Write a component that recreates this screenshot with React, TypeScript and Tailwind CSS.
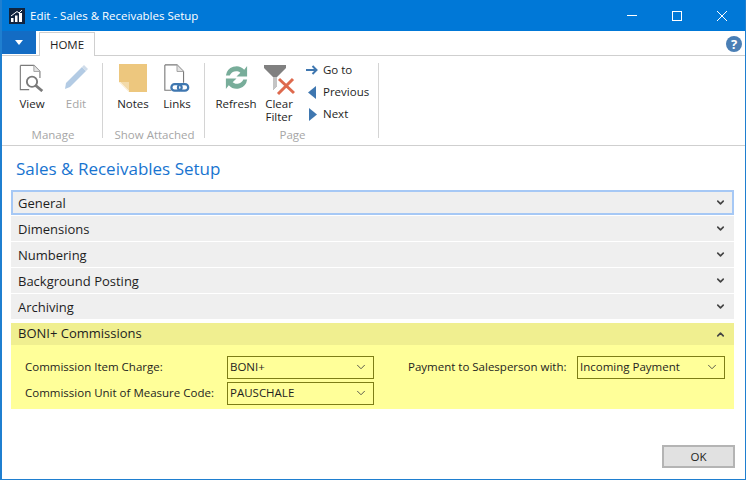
import { ChevronDown, ChevronUp } from "lucide-react";

const font = { fontFamily: '"Open Sans", "Noto Sans", sans-serif' };

const ViewIcon = () => (
  <svg width="28" height="28" viewBox="0 0 30 30">
    <path d="M2.5 1.5H17L23.5 8V15M2.5 1.5V27.5H12" fill="none" stroke="#7a7a7a" strokeWidth="1.2" />
    <path d="M17 1.5V8H23.5" fill="#e4e4e4" stroke="#a0a0a0" strokeWidth="1" />
    <circle cx="15" cy="19" r="5.5" fill="#fff" stroke="#7a7a7a" strokeWidth="2" />
    <path d="M19 23L26 29" stroke="#7a7a7a" strokeWidth="3" />
  </svg>
);

const EditIcon = () => (
  <svg width="24" height="26" viewBox="0 0 24 26">
    <path d="M2 19L18 3L22 7L6 23L1 25Z" fill="#b3cbe4" />
    <path d="M18 3L20 1L24 5L22 7Z" fill="#cfdcea" />
  </svg>
);

const NotesIcon = () => (
  <svg width="28" height="28" viewBox="0 0 28 28">
    <path d="M0 0H28V28H10L0 18Z" fill="#edc77e" />
    <path d="M0 18H10V28Z" fill="#fff" />
    <path d="M1 18H10V27Z" fill="#edc77e" opacity="0.65" />
  </svg>
);

const LinksIcon = () => (
  <svg width="28" height="29" viewBox="0 0 28 31">
    <path d="M1 1H14L21 8V20M1 1V28H8" fill="none" stroke="#7a7a7a" strokeWidth="1.2" />
    <path d="M14 1V8H21" fill="#e4e4e4" stroke="#a0a0a0" strokeWidth="1" />
    <rect x="8" y="21.5" width="11" height="7" rx="3.5" fill="none" stroke="#3f77b0" strokeWidth="2.4" />
    <rect x="15" y="21.5" width="11" height="7" rx="3.5" fill="none" stroke="#3f77b0" strokeWidth="2.4" />
  </svg>
);

const RefreshIcon = () => (
  <svg width="27" height="27" viewBox="0 0 28 28">
    <path d="M3 12A11 11 0 0 1 22 6L25 2V13H14L18 9A7 7 0 0 0 7 12Z" fill="#78ad9a" />
    <path d="M25 16A11 11 0 0 1 6 22L3 26V15H14L10 19A7 7 0 0 0 21 16Z" fill="#78ad9a" />
  </svg>
);

const ClearFilterIcon = () => (
  <svg width="32" height="32" viewBox="0 0 32 32">
    <path d="M1 1H23V4L14 13V22L10 26V13L1 4Z" fill="#808080" />
    <path d="M10 13V26L14 22V13Z" fill="#c4c4c4" />
    <path d="M15 30L30 15M16 15L31 29" stroke="#de6a4e" strokeWidth="3" />
  </svg>
);

const RibbonButton = ({ label, icon, muted }: { label: string; icon: React.ReactNode; muted?: boolean }) => (
  <div className="flex flex-col items-center">
    <div className="flex h-[34px] items-start justify-center pt-px">{icon}</div>
    <div className={`text-center text-[11.5px] leading-[13px] ${muted ? "text-[#a6a6a6]" : "text-[#1e1e1e]"}`}>{label}</div>
  </div>
);

const RibbonGroup = ({ title, width, children }: { title: string; width: string; children: React.ReactNode }) => (
  <div className={`flex h-[75px] flex-col border-r border-[#d4d4d4] ${width}`}>
    <div className="flex h-[62px] items-start">{children}</div>
    <div className="-mb-[3px] mt-auto pl-[2px] text-center text-[11.5px] leading-[12px] text-[#a6a6a6]">{title}</div>
  </div>
);

const SmallAction = ({ label, icon }: { label: string; icon: React.ReactNode }) => (
  <div className="flex h-[22px] items-center">
    <div className="flex w-[16px] justify-center">{icon}</div>
    <span className="ml-[3px] text-[11.5px] leading-[16px] text-[#1e1e1e]">{label}</span>
  </div>
);

const Section = ({ label, focus }: { label: string; focus?: boolean }) => (
  <div className={`flex h-[25px] items-center justify-between bg-[#efefef] text-[13px] text-[#1e1e1e] ${focus ? "border-2 border-[#a6c8f5] pl-[5px] pr-[6px]" : "pl-[7px] pr-[8px]"}`}>
    <span className="pt-[2px]">{label}</span>
    <ChevronDown size={11} strokeWidth={3.5} className="text-[#444]" />
  </div>
);

const Field = ({ value }: { value: string }) => (
  <div className="flex h-[23px] items-center justify-between border border-[#7d7d16] pb-px pl-[2px] pr-[5px] text-[11.5px] text-[#1e1e1e]">
    <span>{value}</span>
    <ChevronDown size={14} strokeWidth={1.5} className="text-[#444]" />
  </div>
);

export default function App() {
  return (
    <div style={font} className="flex h-[480px] w-[746px] flex-col overflow-hidden border-b border-l-2 border-r border-[#1f7fd0] bg-white">
      <div className="-ml-[2px] -mr-px flex h-[31px] shrink-0 items-center bg-[#0078d7] pl-[9px] text-white">
        <svg width="16" height="16" viewBox="0 0 16 16" className="shrink-0">
          <rect width="16" height="16" fill="#10243f" />
          <path d="M2 14V10H4.5V14ZM6 14V7.5H8.5V14ZM10 14V5H13V14Z" fill="#fff" />
          <path d="M2 8L8 3.5L10 5L13 2" fill="none" stroke="#fff" strokeWidth="1" />
        </svg>
        <span className="ml-[5px] text-[11.5px]">Edit - Sales &amp; Receivables Setup</span>
        <div className="ml-auto flex items-center gap-[35px] pr-[19px]">
          <div className="h-px w-[10px] bg-white" />
          <div className="h-[10px] w-[10px] border border-white" />
          <svg width="10" height="10" viewBox="0 0 10 10">
            <path d="M0 0L10 10M10 0L0 10" stroke="#fff" strokeWidth="1" />
          </svg>
        </div>
      </div>

      <div className="flex h-[25px] shrink-0 items-end border-b border-[#cfcfcf]">
        <div className="mb-px flex h-[23px] w-[34px] items-center justify-center bg-[#136cc4]">
          <div className="h-0 w-0 border-x-[4px] border-t-[5px] border-x-transparent border-t-white" />
        </div>
        <div className="relative top-px ml-[3px] flex h-[24px] w-[56px] items-center justify-center border-x border-t border-[#cfcfcf] bg-white text-[11.5px] text-[#1e1e1e]">
          HOME
        </div>
        <div className="ml-auto mb-[3px] mr-[3px] flex h-[16px] w-[16px] items-center justify-center rounded-full bg-[#4a7fb5] text-[13px] font-bold leading-none text-white">
          ?
        </div>
      </div>

      <div className="flex h-[90px] shrink-0 items-start border-b border-[#cfcfcf] pt-[7px]">
        <RibbonGroup title="Manage" width="w-[101px]">
          <div className="ml-[13px] w-[34px]"><RibbonButton label="View" icon={<ViewIcon />} /></div>
          <div className="ml-[10px] w-[34px]"><RibbonButton label="Edit" icon={<EditIcon />} muted /></div>
        </RibbonGroup>
        <RibbonGroup title="Show Attached" width="w-[102px]">
          <div className="ml-[13px] w-[34px]"><RibbonButton label="Notes" icon={<NotesIcon />} /></div>
          <div className="ml-[10px] w-[34px]"><RibbonButton label="Links" icon={<LinksIcon />} /></div>
        </RibbonGroup>
        <RibbonGroup title="Page" width="w-[174px]">
          <div className="ml-[11px] w-[40px]"><RibbonButton label="Refresh" icon={<RefreshIcon />} /></div>
          <div className="ml-[4px] w-[38px]"><RibbonButton label="Clear Filter" icon={<ClearFilterIcon />} /></div>
          <div className="-mt-[4px] ml-[6px] flex flex-col">
            <SmallAction
              label="Go to"
              icon={
                <svg width="12" height="10" viewBox="0 0 12 10">
                  <path d="M0 5H10M6.5 1L10.5 5L6.5 9" fill="none" stroke="#3f77b0" strokeWidth="2" />
                </svg>
              }
            />
            <SmallAction
              label="Previous"
              icon={
                <svg width="9" height="13" viewBox="0 0 9 13">
                  <path d="M8 0V13L0 6.5Z" fill="#3f77b0" />
                </svg>
              }
            />
            <SmallAction
              label="Next"
              icon={
                <svg width="9" height="13" viewBox="0 0 9 13">
                  <path d="M1 0V13L9 6.5Z" fill="#3f77b0" />
                </svg>
              }
            />
          </div>
        </RibbonGroup>
      </div>

      <div className="flex-1 pl-[9px] pr-[11px]">
        <h1 className="ml-[5px] mt-[10px] text-[17px] leading-[26px] text-[#1874d0]">Sales &amp; Receivables Setup</h1>
        <div className="mt-[8px] flex flex-col gap-px">
          <Section label="General" focus />
          <Section label="Dimensions" />
          <Section label="Numbering" />
          <Section label="Background Posting" />
          <Section label="Archiving" />
          <div className="mt-[3px]">
            <div className="flex h-[22px] items-center justify-between bg-[#f0ef90] pl-[7px] pr-[8px] text-[13px] text-[#1e1e1e]">
              <span className="pb-px">BONI+ Commissions</span>
              <ChevronUp size={11} strokeWidth={3.5} className="text-[#444]" />
            </div>
            <div className="grid h-[64px] grid-cols-[202px_147px_1fr_148px] grid-rows-[23px_23px] content-start gap-y-[3px] bg-[#ffff99] pl-[14px] pr-[9px] pt-[11px] text-[11.5px] text-[#1e1e1e]">
              <div className="flex items-center pb-[2px]">Commission Item Charge:</div>
              <Field value="BONI+" />
              <div className="flex items-center pb-[2px] pl-[34px]">Payment to Salesperson with:</div>
              <Field value="Incoming Payment" />
              <div className="flex items-center whitespace-nowrap pb-[2px]">Commission Unit of Measure Code:</div>
              <Field value="PAUSCHALE" />
            </div>
          </div>
        </div>
      </div>

      <div className="flex shrink-0 justify-end pb-[11px] pr-[10px]">
        <div className="flex h-[23px] w-[73px] items-center justify-center border-2 border-[#b4b4b4] bg-[#e1e1e1] text-[11.5px] text-[#1e1e1e]">OK</div>
      </div>
    </div>
  );
}
